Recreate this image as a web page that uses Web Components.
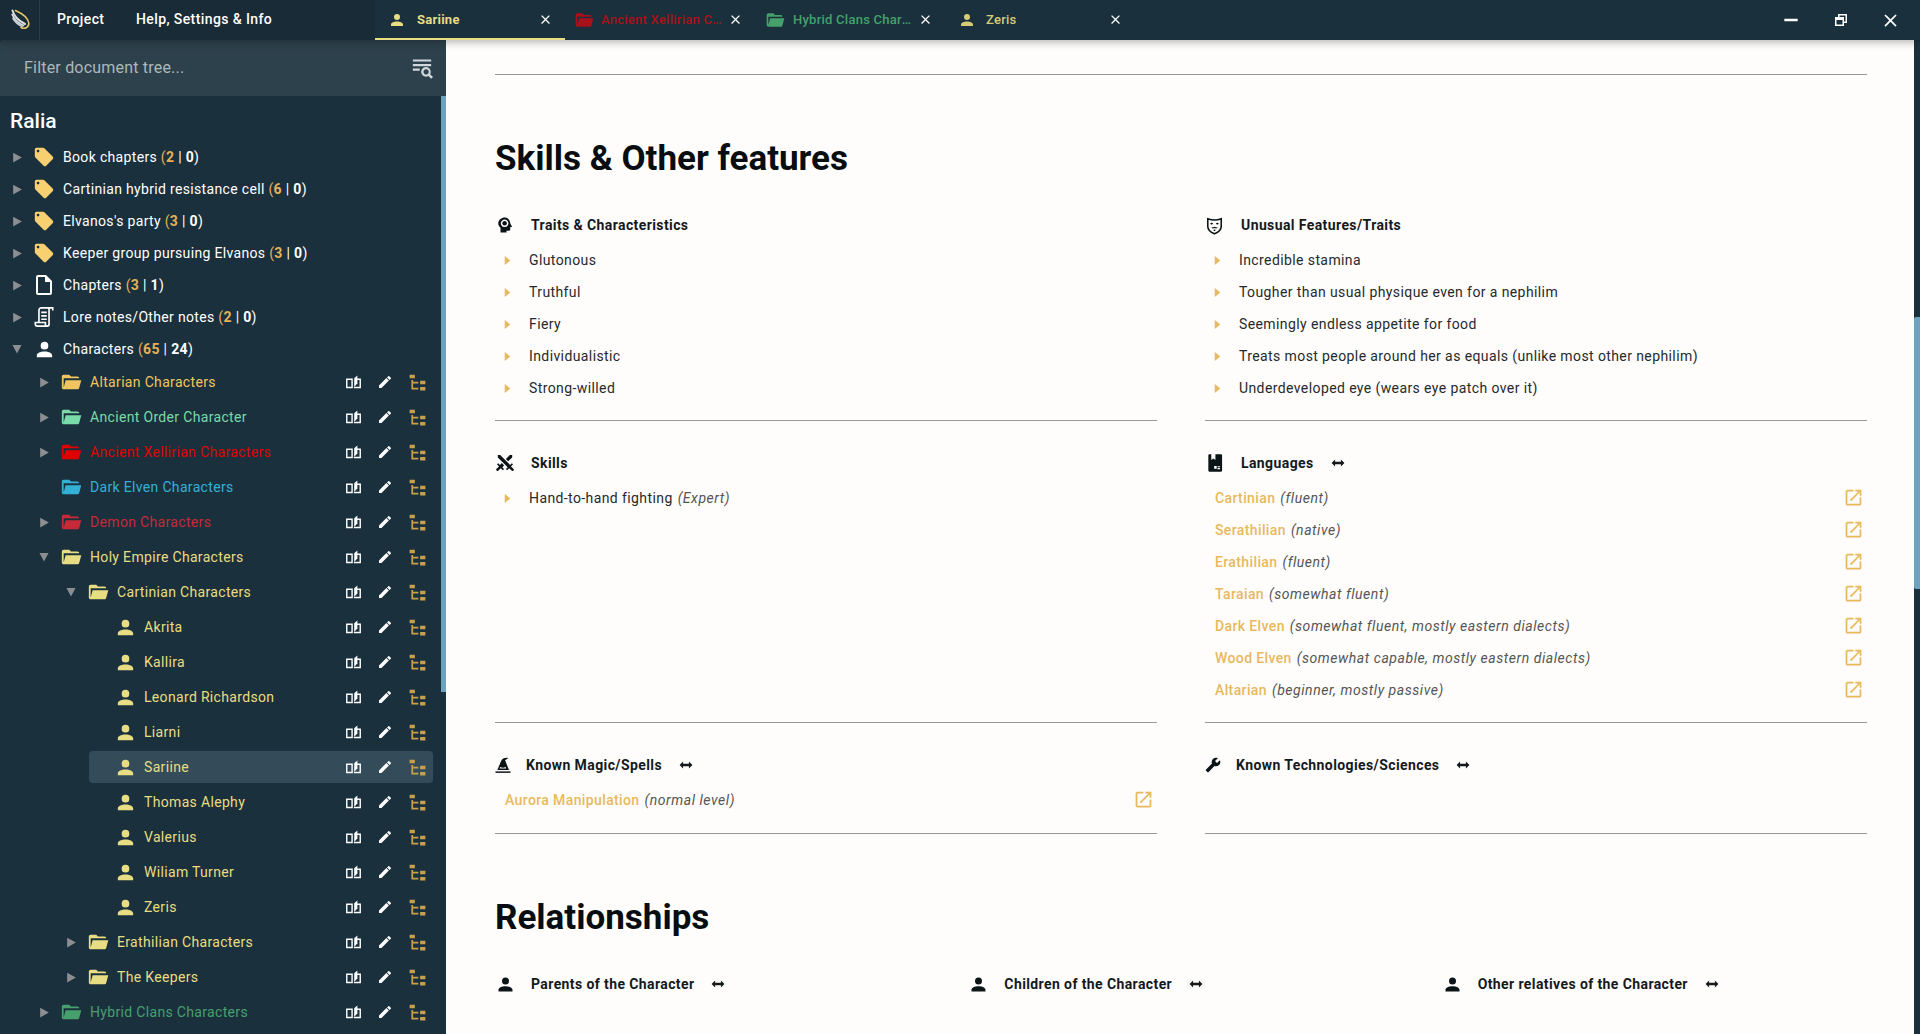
<!DOCTYPE html>
<html lang="en">
<head>
<meta charset="utf-8">
<title>Ralia</title>
<style>
  html, body { margin: 0; height: 100%; overflow: hidden; background: #1b303d; }
  body { font-family: Roboto, "Liberation Sans", sans-serif; }
  app-shell { height: 100vh; }
</style>
</head>
<body>
<app-shell>
  <title-bar slot="top">
    <doc-tab icon="account" color="#e8dd82" active pad="13" size="18" gap="11">Sariine</doc-tab>
    <doc-tab icon="folder" color="#a81119" pad="9" size="20" gap="7">Ancient Xellirian Characters</doc-tab>
    <doc-tab icon="folder" color="#45a06c" pad="10" size="20" gap="8">Hybrid Clans Characters</doc-tab>
    <doc-tab icon="account" color="#d6cc78" pad="13" size="18" gap="10">Zeris</doc-tab>
  </title-bar>

  <tree-panel slot="side" title="Ralia">
    <tree-row level="1" arrow="right" icon="tag" tint="#f9d06f" c1="2" c2="0">Book chapters</tree-row>
    <tree-row level="1" arrow="right" icon="tag" tint="#f9d06f" c1="6" c2="0">Cartinian hybrid resistance cell</tree-row>
    <tree-row level="1" arrow="right" icon="tag" tint="#f9d06f" c1="3" c2="0">Elvanos's party</tree-row>
    <tree-row level="1" arrow="right" icon="tag" tint="#f9d06f" c1="3" c2="0">Keeper group pursuing Elvanos</tree-row>
    <tree-row level="1" arrow="right" icon="file" tint="#fff" c1="3" c2="1">Chapters</tree-row>
    <tree-row level="1" arrow="right" icon="script" tint="#fff" c1="2" c2="0">Lore notes/Other notes</tree-row>
    <tree-row level="1" arrow="down" icon="account" tint="#fff" c1="65" c2="24" last>Characters</tree-row>
    <tree-row level="2" arrow="right" icon="folder" tint="#f0c55f" actions>Altarian Characters</tree-row>
    <tree-row level="2" arrow="right" icon="folder" tint="#78dba8" actions>Ancient Order Character</tree-row>
    <tree-row level="2" arrow="right" icon="folder" tint="#e00000" actions>Ancient Xellirian Characters</tree-row>
    <tree-row level="2" icon="folder" tint="#33b0d6" actions>Dark Elven Characters</tree-row>
    <tree-row level="2" arrow="right" icon="folder" tint="#c62a38" actions>Demon Characters</tree-row>
    <tree-row level="2" arrow="down" icon="folder" tint="#e8dd82" actions>Holy Empire Characters</tree-row>
    <tree-row level="3" arrow="down" icon="folder" tint="#e8dd82" actions>Cartinian Characters</tree-row>
    <tree-row level="4" icon="account" tint="#e8dd82" actions>Akrita</tree-row>
    <tree-row level="4" icon="account" tint="#e8dd82" actions>Kallira</tree-row>
    <tree-row level="4" icon="account" tint="#e8dd82" actions>Leonard Richardson</tree-row>
    <tree-row level="4" icon="account" tint="#e8dd82" actions>Liarni</tree-row>
    <tree-row level="4" icon="account" tint="#e8dd82" actions selected>Sariine</tree-row>
    <tree-row level="4" icon="account" tint="#e8dd82" actions>Thomas Alephy</tree-row>
    <tree-row level="4" icon="account" tint="#e8dd82" actions>Valerius</tree-row>
    <tree-row level="4" icon="account" tint="#e8dd82" actions>Wiliam Turner</tree-row>
    <tree-row level="4" icon="account" tint="#e8dd82" actions>Zeris</tree-row>
    <tree-row level="3" arrow="right" icon="folder" tint="#e8dd82" actions>Erathilian Characters</tree-row>
    <tree-row level="3" arrow="right" icon="folder" tint="#e8dd82" actions>The Keepers</tree-row>
    <tree-row level="2" arrow="right" icon="folder" tint="#45a06c" actions>Hybrid Clans Characters</tree-row>
  </tree-panel>

  <main-panel slot="main">
    <sheet-rule></sheet-rule>
    <sheet-title>Skills &amp; Other features</sheet-title>
    <sheet-grid cols="2">
      <field-block icon="head" label="Traits &amp; Characteristics">
        <field-item>Glutonous</field-item>
        <field-item>Truthful</field-item>
        <field-item>Fiery</field-item>
        <field-item>Individualistic</field-item>
        <field-item>Strong-willed</field-item>
      </field-block>
      <field-block icon="mask" label="Unusual Features/Traits">
        <field-item>Incredible stamina</field-item>
        <field-item>Tougher than usual physique even for a nephilim</field-item>
        <field-item>Seemingly endless appetite for food</field-item>
        <field-item>Treats most people around her as equals (unlike most other nephilim)</field-item>
        <field-item>Underdeveloped eye (wears eye patch over it)</field-item>
      </field-block>
      <field-block icon="swords" label="Skills">
        <field-item note="(Expert)">Hand-to-hand fighting</field-item>
      </field-block>
      <field-block icon="language" label="Languages" swap>
        <link-item note="(fluent)">Cartinian</link-item>
        <link-item note="(native)">Serathilian</link-item>
        <link-item note="(fluent)">Erathilian</link-item>
        <link-item note="(somewhat fluent)">Taraian</link-item>
        <link-item note="(somewhat fluent, mostly eastern dialects)">Dark Elven</link-item>
        <link-item note="(somewhat capable, mostly eastern dialects)">Wood Elven</link-item>
        <link-item note="(beginner, mostly passive)">Altarian</link-item>
      </field-block>
      <field-block icon="hat" label="Known Magic/Spells" swap tall>
        <link-item note="(normal level)">Aurora Manipulation</link-item>
      </field-block>
      <field-block icon="wrench" label="Known Technologies/Sciences" swap tall>
        <link-item hidden-row></link-item>
      </field-block>
    </sheet-grid>
    <sheet-title>Relationships</sheet-title>
    <sheet-grid cols="3">
      <field-block icon="account" label="Parents of the Character" swap plain></field-block>
      <field-block icon="account" label="Children of the Character" swap plain></field-block>
      <field-block icon="account" label="Other relatives of the Character" swap plain></field-block>
    </sheet-grid>
  </main-panel>
</app-shell>

<script>
const ICONS = {
  account: '<path d="M12,4A4,4 0 0,1 16,8A4,4 0 0,1 12,12A4,4 0 0,1 8,8A4,4 0 0,1 12,4M12,14C16.42,14 20,15.79 20,18V20H4V18C4,15.79 7.58,14 12,14Z"/>',
  tag: '<path d="M5.5,7A1.5,1.5 0 0,1 4,5.5A1.5,1.5 0 0,1 5.5,4A1.5,1.5 0 0,1 7,5.5A1.5,1.5 0 0,1 5.5,7M21.41,11.58L12.41,2.58C12.05,2.22 11.55,2 11,2H4C2.89,2 2,2.89 2,4V11C2,11.55 2.22,12.05 2.59,12.41L11.58,21.41C11.95,21.77 12.45,22 13,22C13.55,22 14.05,21.77 14.41,21.41L21.41,14.41C21.78,14.05 22,13.55 22,13C22,12.44 21.77,11.94 21.41,11.58Z"/>',
  file: '<path d="M14,2H6A2,2 0 0,0 4,4V20A2,2 0 0,0 6,22H18A2,2 0 0,0 20,20V8L14,2M18,20H6V4H13V9H18V20Z"/>',
  folder: '<path d="M19,20H4C2.89,20 2,19.1 2,18V6C2,4.89 2.89,4 4,4H10L12,6H19A2,2 0 0,1 21,8H21L4,8V18L6.14,10H23.21L20.93,18.5C20.7,19.37 19.92,20 19,20Z"/>',
  pencil: '<path d="M20.71,7.04C21.1,6.65 21.1,6 20.71,5.63L18.37,3.29C18,2.9 17.35,2.9 16.96,3.29L15.12,5.12L18.87,8.87M3,17.25V21H6.75L17.81,9.93L14.06,6.18L3,17.25Z"/>',
  tree: '<path d="M3,3H9V7H3V3M15,10H21V14H15V10M15,17H21V21H15V17M13,13H7V18H13V20H7L5,20V9H7V11H13V13Z"/>',
  book: '<path d="M2.5 7.5H10V19H2.5ZM15 7.5H21.5V19H12.5" fill="none" stroke="currentColor" stroke-width="2"/><path d="M13 6L17.5 2V13.5L13 18Z"/>',
  open: '<path d="M14,3V5H17.59L7.76,14.83L9.17,16.24L19,6.41V10H21V3M19,19H5V5H12V3H5C3.89,3 3,3.9 3,5V19A2,2 0 0,0 5,21H19A2,2 0 0,0 21,19V12H19V19Z"/>',
  close: '<path d="M19,6.41L17.59,5L12,10.59L6.41,5L5,6.41L10.59,12L5,17.59L6.41,19L12,13.41L17.59,19L19,17.59L13.41,12L19,6.41Z"/>',
  minus: '<path d="M4,10.5H20V13.5H4Z"/>',
  restore: '<path d="M4,8H8V4H20V16H16V20H4V8M16,8V14H18V6H10V8H16M6,12V18H14V12H6Z"/>',
  swap: '<path d="M1,12L7,6V10H17V6L23,12L17,18V14H7V18Z"/>',
  wrench: '<path transform="matrix(-1 0 0 1 24 0)" d="M22.7,19L13.6,9.9C14.5,7.6 14,4.9 12.1,3C10.1,1 7.1,0.6 4.7,1.7L9,6L6,9L1.6,4.7C0.4,7.1 0.9,10.1 2.9,12.1C4.8,14 7.5,14.5 9.8,13.6L18.9,22.7C19.3,23.1 19.9,23.1 20.3,22.7L22.6,20.4C23.1,20 23.1,19.3 22.7,19Z"/>',
  swords: '<path d="M6.2,2.44L18.1,14.34L20.22,12.22L21.63,13.63L19.16,16.1L22.34,19.28C22.73,19.67 22.73,20.3 22.34,20.69L21.63,21.4C21.24,21.79 20.61,21.79 20.22,21.4L17,18.23L14.56,20.7L13.15,19.29L15.27,17.17L3.37,5.27V2.44H6.2M15.89,10L20.63,5.26V2.44H17.8L13.06,7.18L15.89,10M10.94,15L8.11,12.13L5.9,14.34L3.78,12.22L2.37,13.63L4.84,16.1L1.66,19.29C1.27,19.68 1.27,20.31 1.66,20.7L2.37,21.41C2.76,21.8 3.39,21.8 3.78,21.41L7,18.23L9.44,20.7L10.85,19.29L8.73,17.17L10.94,15Z"/>',
  head: '<path fill-rule="evenodd" d="M12 2C7 2 3 5.5 3 10C3 12.5 4 14 6 15.5V22H14V19.5H17C18.2 19.5 19 18.7 19 17.5V14.5H21.5L19 9.5C18.5 5 15.5 2 12 2ZM11.5 4.7A5 5 0 1 1 11.49 4.7Z"/><circle cx="11.5" cy="9.7" r="3"/>',
  mask: '<path d="M3.5 3.5C9 5.5 15 5.5 20.5 3.5V13C20.5 18 16 21 12 22.5C8 21 3.5 18 3.5 13Z" fill="none" stroke="currentColor" stroke-width="2"/><path d="M6.5 9.5C7.5 8.3 9.3 8.3 10.3 9.5L9 10.6H7.6ZM13.7 9.5C14.7 8.3 16.5 8.3 17.5 9.5L16.4 10.6H15ZM8 14.5C9.5 14.5 11 14 12 13.5C13 14 14.5 14.5 16 14.5C15 16 13.5 15.9 12 15.3C10.5 15.9 9 16 8 14.5ZM11 17H13V19H11Z"/>',
  language: '<path d="M5.5 1.5H7.5V8.5L10 6.5L12.5 8.5V1.5H19C19.8 1.5 20.5 2.2 20.5 3V21C20.5 21.8 19.8 22.5 19 22.5H5.5C4.7 22.5 4 21.8 4 21V3C4 2.2 4.7 1.5 5.5 1.5Z"/><path d="M11 15.5H14V19H11ZM15 16H18V17H15ZM15 18H18V19.5H15Z" fill="#fff"/>',
  hat: '<path d="M2 20.5H22V22.5H2Z"/><path fill-rule="evenodd" d="M4.5 18.5L9.5 6.5C11 3 15 1.5 19 2.5L14.8 5.8L20 18.5ZM7.5 16.7H16.3L15.6 14.8C13 15.8 10.5 15.8 8.3 14.8Z"/>',
  script: '<path d="M6.5 18V4.5C6.5 3.1 7.6 2 9 2H21.5V5M17.5 2.2V20C17.5 21.1 16.6 22 15.5 22H4.5C3.4 22 2.5 21.1 2.5 20V18H13.5V20C13.5 21.1 14.4 22 15.5 22" fill="none" stroke="currentColor" stroke-width="1.8"/><path d="M9 6H15V7.8H9ZM9 9.8H15V11.6H9ZM9 13.6H15V15.4H9Z"/>',
  search: '<path d="M2 2.6H22V5H2ZM2 7.6H22V10H2ZM2 12.6H9.5V15H2Z" /><path fill-rule="evenodd" d="M16.5 11A5.2 5.2 0 0 1 20.9 18.7L24 21.8L22 23.8L18.9 20.7A5.2 5.2 0 1 1 16.5 11ZM16.5 13.4A2.8 2.8 0 1 0 16.51 13.4Z"/>',
  right: '<path d="M4,3L20,12L4,21Z"/>',
  down: '<path d="M3,4L21,4L12,21Z"/>',
  bullet: '<path d="M6,2L18,12L6,22Z"/>'
};

function shadow(el, html) {
  const root = el.attachShadow({ mode: 'open' });
  root.innerHTML = html;
  return root;
}

class XIcon extends HTMLElement {
  connectedCallback() {
    if (this.shadowRoot) return;
    const s = this.getAttribute('size') || 24;
    shadow(this, `<style>:host{display:inline-flex;flex:none;align-items:center;justify-content:center}
      svg{display:block;fill:currentColor}</style>
      <svg width="${s}" height="${s}" viewBox="0 0 24 24">${ICONS[this.getAttribute('name')] || ''}</svg>`);
  }
}
customElements.define('x-icon', XIcon);

class AppShell extends HTMLElement {
  constructor() {
    super();
    shadow(this, `<style>
      :host{display:grid;grid-template-columns:446px 1fr;grid-template-rows:40px 1fr;background:#1b303d;overflow:hidden}
      .top{grid-column:1 / 3;position:relative;z-index:2;box-shadow:0 2px 8px rgba(0,0,0,.3)}
      .side{min-height:0;overflow:hidden}
      .main{min-height:0;overflow:hidden}
    </style>
    <div class="top"><slot name="top"></slot></div>
    <div class="side"><slot name="side"></slot></div>
    <div class="main"><slot name="main"></slot></div>`);
  }
}
customElements.define('app-shell', AppShell);

class TitleBar extends HTMLElement {
  constructor() {
    super();
    shadow(this, `<style>
      :host{display:flex;height:40px;background:#1b303d;color:#fff;font-size:14px;font-weight:500}
      .menu{display:flex;width:375px;flex:none;background:#182b36;letter-spacing:.4px}
      .logo{width:40px;box-sizing:border-box;border-right:1px solid #2b3e49;display:flex;align-items:center;justify-content:center;height:40px;padding-left:2px}
      .item{line-height:38px}
      .p{margin-left:17px}.h{margin-left:31.5px}
      .tabs{display:flex;flex:1}
      .win{display:flex;width:149px;justify-content:flex-end;margin-right:5px}
      .win x-icon{width:49.5px;height:40px;color:#fff}
    </style>
    <div class="menu">
      <div class="logo"><svg width="20" height="24" viewBox="0 0 20 24" fill="none" stroke-linecap="round">
        <path d="M1.5 2.5C3 8 8 13 14 16" stroke="#d9dee0" stroke-width="2"/>
        <path d="M1.2 6.5C3 11 7 15 12.5 17.5" stroke="#d9dee0" stroke-width="1.8"/>
        <path d="M2 10.5C4 14 7 16.5 11 18.5" stroke="#c9cfd2" stroke-width="1.6"/>
        <path d="M4.5 2.5C10 5 17 9 17.8 15C18.2 19 14 21.5 10 19.5" stroke="#e2c765" stroke-width="1.6"/>
      </svg></div>
      <div class="item p">Project</div>
      <div class="item h">Help, Settings &amp; Info</div>
    </div>
    <div class="tabs"><slot></slot></div>
    <div class="win">
      <x-icon name="minus" size="20"></x-icon>
      <x-icon name="restore" size="18"></x-icon>
      <x-icon name="close" size="21"></x-icon>
    </div>`);
  }
}
customElements.define('title-bar', TitleBar);

class DocTab extends HTMLElement {
  connectedCallback() {
    if (this.shadowRoot) return;
    const a = n => this.getAttribute(n);
    const pad = +a('pad'), size = +a('size'), gap = +a('gap');
    shadow(this, `<style>
      :host{display:flex;align-items:center;box-sizing:border-box;width:190px;height:40px;flex:none;
        padding-left:${pad}px;padding-top:1px;color:${a('color')};font-size:13px;font-weight:500;letter-spacing:.25px;
        border-bottom:2px solid transparent}
      :host([active]){border-bottom-color:#e8dd82;font-weight:700}
      .ico{flex:none}
      .t{margin-left:${gap}px;width:${157 - pad - size - gap}px;white-space:nowrap;overflow:hidden;text-overflow:ellipsis;flex:none}
      .x{margin-left:6px;color:#fff;flex:none}
    </style>
    <x-icon class="ico" name="${a('icon')}" size="${size}"></x-icon>
    <span class="t"><slot></slot></span>
    <x-icon class="x" name="close" size="15"></x-icon>`);
  }
}
customElements.define('doc-tab', DocTab);

class TreePanel extends HTMLElement {
  connectedCallback() {
    if (this.shadowRoot) return;
    shadow(this, `<style>
      :host{display:flex;flex-direction:column;height:994px;background:#1b303d;color:#fff}
      .search{height:56px;flex:none;box-sizing:border-box;padding:0 13px 0 24px;background:#2d414c;border-radius:4px 0 0 0;
        display:flex;align-items:center;justify-content:space-between;color:#aeb7bb;font-size:16px;letter-spacing:.2px}
      .search span{margin-bottom:2px}
      .search x-icon{color:#d0d6d9}
      .body{flex:1;display:flex;min-height:0}
      .tree{flex:1;min-width:0;overflow:hidden}
      h2{margin:0;height:45px;line-height:50px;padding-left:10px;font-size:21px;font-weight:500;color:#fff;box-sizing:border-box}
      .bar{width:5px;flex:none}
      .thumb{height:596px;background:#6ba3c0}
    </style>
    <div class="search"><span>Filter document tree...</span><x-icon name="search" size="22"></x-icon></div>
    <div class="body">
      <div class="tree"><h2>${this.getAttribute('title')}</h2><slot></slot></div>
      <div class="bar"><div class="thumb"></div></div>
    </div>`);
  }
}
customElements.define('tree-panel', TreePanel);

class TreeRow extends HTMLElement {
  connectedCallback() {
    if (this.shadowRoot) return;
    const a = n => this.getAttribute(n);
    const lvl = +a('level');
    const count = a('c1') !== null
      ? ` <span class="c"><span class="o">(<b>${a('c1')}</b></span> | <b>${a('c2')}</b>)</span>` : '';
    const arrow = a('arrow');
    const acts = this.hasAttribute('actions') ? `<div class="acts">
      <span><x-icon name="book" size="17"></x-icon></span>
      <span><x-icon name="pencil" size="16"></x-icon></span>
      <span class="g"><x-icon name="tree" size="21"></x-icon></span></div>` : '';
    const sizes = { folder: 22, tag: 22, script: 22, file: 24, account: 23 };
    shadow(this, `<style>
      :host{display:flex;align-items:center;height:32px;box-sizing:border-box;
        margin-left:${8 + 27 * (lvl - 1)}px;margin-right:8px;border-radius:4px;
        margin-bottom:${a('actions') !== null ? 3 : a('last') !== null ? 1 : 0}px;
        color:${a('actions') !== null ? a('tint') : '#fff'};font-size:14px;letter-spacing:.33px;white-space:nowrap}
      :host([selected]){background:#344c5a}
      .ar{width:18px;flex:none;display:flex;justify-content:center;color:#8c8f91}
      .ic{width:36px;flex:none;display:flex;justify-content:center;color:${a('tint')};margin-right:1px}
      .txt{flex:1;min-width:0}
      .c{color:#fff}.o{color:#e3b258}
      b{font-weight:700}
      .acts{display:flex;flex:none;color:#fff}
      .acts span{width:32px;display:flex;justify-content:center}
      .acts .g{color:#c9a04a}
    </style>
    <span class="ar">${arrow ? `<x-icon name="${arrow}" size="${arrow === 'down' ? 12 : 13}"></x-icon>` : ''}</span>
    <span class="ic"><x-icon name="${a('icon')}" size="${sizes[a('icon')]}"></x-icon></span>
    <span class="txt"><slot></slot>${count}</span>${acts}`);
  }
}
customElements.define('tree-row', TreeRow);

class MainPanel extends HTMLElement {
  constructor() {
    super();
    shadow(this, `<style>
      :host{display:flex;height:994px;background:#1b303d}
      .page{flex:1;min-width:0;background:#fefdfc;box-sizing:border-box;padding:34px 47px 0 49px;overflow:hidden;color:#0d1418}
      .bar{width:6px;flex:none;padding-top:277px;box-sizing:border-box}
      .thumb{height:272px;background:#6ba3c0;border-radius:2px 0 0 2px}
    </style>
    <div class="page"><slot></slot></div>
    <div class="bar"><div class="thumb"></div></div>`);
  }
}
customElements.define('main-panel', MainPanel);

class SheetRule extends HTMLElement {
  constructor() {
    super();
    shadow(this, `<style>:host{display:block;height:1px;background:#999}</style>`);
  }
}
customElements.define('sheet-rule', SheetRule);

class SheetTitle extends HTMLElement {
  constructor() {
    super();
    shadow(this, `<style>:host{display:block;margin:63px 0 29px;font-size:35px;line-height:42px;font-weight:700;color:#070d10}</style><slot></slot>`);
  }
}
customElements.define('sheet-title', SheetTitle);

class SheetGrid extends HTMLElement {
  connectedCallback() {
    if (this.shadowRoot) return;
    shadow(this, `<style>:host{display:grid;grid-template-columns:repeat(${this.getAttribute('cols')},1fr);column-gap:48px}</style><slot></slot>`);
  }
}
customElements.define('sheet-grid', SheetGrid);

const HEAD_LAYOUT = {
  head: [1, 18, 17], swords: [0, 20, 16], mask: [0, 19, 17], language: [0, 20, 16],
  hat: [-1.5, 18, 14.5], wrench: [0, 16, 15], account: [0, 21, 15]
};
class FieldBlock extends HTMLElement {
  connectedCallback() {
    if (this.shadowRoot) return;
    const a = n => this.getAttribute(n);
    const [ml, sz, gap] = HEAD_LAYOUT[a('icon')];
    const plain = this.hasAttribute('plain');
    const tall = this.hasAttribute('tall');
    shadow(this, `<style>
      :host{display:block;box-sizing:border-box;
        ${plain ? '' : `border-bottom:1px solid #999;padding-bottom:${tall ? 17 : 16}px;margin-bottom:${tall ? 0 : 26}px;`}}
      .h{display:flex;align-items:center;height:32px;margin-bottom:3px;font-size:14px;font-weight:700;letter-spacing:.4px;color:#14191c}
      .i{margin-left:${ml}px;margin-right:${gap}px;width:${sz}px;height:${sz}px;color:#0b1417}
      .s{margin-left:17px;color:#14191c}
      .l{display:block;min-height:${plain ? 0 : 32}px}
    </style>
    <div class="h"><x-icon class="i" name="${a('icon')}" size="${sz}"></x-icon><span>${a('label').replace(/&/g, '&amp;')}</span>${this.hasAttribute('swap') ? `<x-icon class="s" name="swap" size="14"></x-icon>` : ''}</div>
    <div class="l"><slot></slot></div>`);
  }
}
customElements.define('field-block', FieldBlock);

class FieldItem extends HTMLElement {
  connectedCallback() {
    if (this.shadowRoot) return;
    const note = this.getAttribute('note');
    shadow(this, `<style>
      :host{display:flex;align-items:center;height:32px;font-size:14px;letter-spacing:.4px;color:#26292b;white-space:nowrap}
      x-icon{margin-left:7px;margin-right:16px;color:#e8b95c}
      i{color:#555;margin-left:5px;letter-spacing:.55px}
    </style><x-icon name="bullet" size="11"></x-icon><span><slot></slot></span>${note ? `<i>${note}</i>` : ''}`);
  }
}
customElements.define('field-item', FieldItem);

class LinkItem extends HTMLElement {
  connectedCallback() {
    if (this.shadowRoot) return;
    const note = this.getAttribute('note');
    if (this.hasAttribute('hidden-row')) {
      shadow(this, `<style>:host{display:block;height:32px}</style>`);
      return;
    }
    shadow(this, `<style>
      :host{display:flex;align-items:center;height:32px;padding-left:10px;font-size:14px;letter-spacing:.38px;white-space:nowrap}
      .n{color:#e8b95c;font-weight:500}
      i{color:#555;margin-left:5px;letter-spacing:.55px}
      x-icon{margin-left:auto;margin-right:3px;margin-bottom:2px;color:#e8b95c}
    </style><span class="n"><slot></slot></span><i>${note}</i><x-icon name="open" size="21"></x-icon>`);
  }
}
customElements.define('link-item', LinkItem);
</script>
</body>
</html>
